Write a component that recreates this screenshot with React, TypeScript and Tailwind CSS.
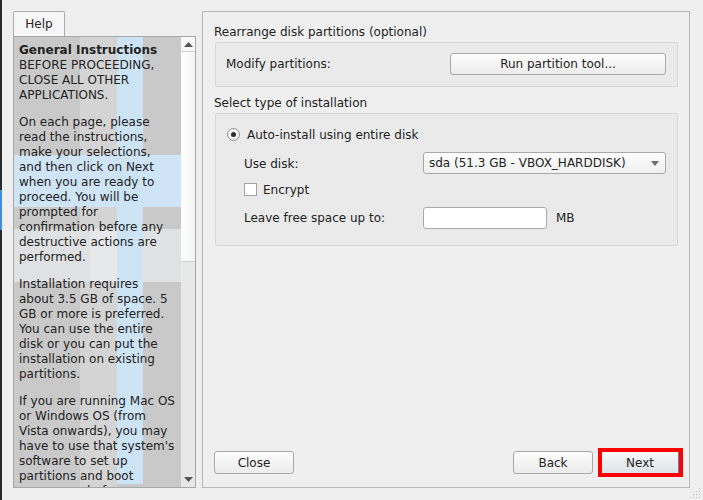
import React from "react";

const helpParas: { bold?: string; lines: string[] }[] = [
  { bold: "General Instructions", lines: ["BEFORE PROCEEDING,", "CLOSE ALL OTHER", "APPLICATIONS."] },
  {
    lines: [
      "On each page, please",
      "read the instructions,",
      "make your selections,",
      "and then click on Next",
      "when you are ready to",
      "proceed. You will be",
      "prompted for",
      "confirmation before any",
      "destructive actions are",
      "performed.",
    ],
  },
  {
    lines: [
      "Installation requires",
      "about 3.5 GB of space. 5",
      "GB or more is preferred.",
      "You can use the entire",
      "disk or you can put the",
      "installation on existing",
      "partitions.",
    ],
  },
  {
    lines: [
      "If you are running Mac OS",
      "or Windows OS (from",
      "Vista onwards), you may",
      "have to use that system's",
      "software to set up",
      "partitions and boot",
      "sequences before",
    ],
  },
];

const btn =
  "flex items-center justify-center border border-[#a9a9a9] rounded-[3px] bg-linear-to-b from-[#fcfcfc] to-[#ececec] text-[#232323]";

export default function App() {
  return (
    <div
      className="relative flex h-[500px] w-[703px] overflow-hidden bg-[#efefef] text-[12px] leading-[15px] text-[#232323]"
      style={{ fontFamily: '"DejaVu Sans", "Liberation Sans", sans-serif' }}
    >
      {/* left window edge */}
      <div className="flex w-[2px] flex-col">
        <div className="h-[190px] bg-[#2b2b2b]" />
        <div className="h-[40px] bg-[#3d8ee0]" />
        <div className="flex-1 bg-[#2b2b2b]" />
      </div>

      {/* Help column */}
      <div className="ml-[11px] mt-[11px] flex h-[477px] w-[183px] flex-col">
        <div className="flex h-[25px] w-[52px] items-center justify-center rounded-t-[2px] border-x border-t border-[#acacac] bg-[#f6f6f6] pt-[1px]">
          Help
        </div>
        <div className="flex min-h-0 flex-1 border border-[#a8a8a8] bg-white">
          <div className="relative min-h-0 flex-1 overflow-hidden bg-[#c9c9c9]">
            {/* background artifacts */}
            <div className="absolute bottom-0 left-[66px] top-0 w-[37px] bg-[#d4d4d4]" />
            <div className="absolute left-0 right-0 top-[118px] h-[52px] bg-[#cfe4f6]" />
            <div className="absolute left-0 right-0 top-[192px] h-[53px] bg-[#e0e1e2]" />
            <div className="absolute left-[76px] top-[192px] h-[53px] w-[27px] bg-[#e7e8e9]" />
            <div className="absolute bottom-[3px] left-[103px] top-0 w-[26px] bg-[#cde3f6]" />

            <div className="relative pl-[5px] pt-[6px]">
              {helpParas.map((p, i) => (
                <div key={i} className="mb-[12px]">
                  {p.bold && <div className="h-[15px] whitespace-nowrap font-bold">{p.bold}</div>}
                  {p.lines.map((l, j) => (
                    <div key={j} className="h-[15px] whitespace-nowrap">
                      {l}
                    </div>
                  ))}
                </div>
              ))}
            </div>
          </div>
          {/* scrollbar */}
          <div className="flex w-[14px] flex-col bg-[#f2f2f2]">
            <div className="flex h-[15px] items-center justify-center border-b border-[#d2d2d2] bg-[#f7f7f7]">
              <svg width="9" height="5" viewBox="0 0 9 5">
                <path d="M0 5 L4.5 0 L9 5 Z" fill="#555" />
              </svg>
            </div>
            <div className="h-[210px] border-b border-[#d0d0d0] bg-linear-to-r from-[#ffffff] to-[#f4f4f4]" />
            <div className="flex-1 bg-[#e8e8e8]" />
            <div className="flex h-[12px] items-start justify-center bg-[#e8e8e8] pt-[2px]">
              <svg width="9" height="5" viewBox="0 0 9 5">
                <path d="M0 0 L4.5 5 L9 0 Z" fill="#555" />
              </svg>
            </div>
          </div>
        </div>
      </div>

      {/* Main panel */}
      <div className="ml-[6px] mt-[11px] flex h-[477px] w-[488px] flex-col border border-[#b8b8b8] px-[11px] pt-[13px]">
        <div className="h-[15px] whitespace-nowrap">Rearrange disk partitions (optional)</div>
        <div className="ml-[1px] mt-[2px] flex items-center rounded-[2px] border border-[#d8d8d8] bg-[#eaeaea] pb-[11px] pl-[10px] pr-[11px] pt-[10px]">
          <span className="pt-[1px]">Modify partitions:</span>
          <div className={`${btn} ml-auto h-[22px] w-[216px] pt-[1px]`}>Run partition tool...</div>
        </div>

        <div className="mt-[9px] h-[15px] whitespace-nowrap">Select type of installation</div>
        <div className="ml-[1px] mt-[2px] flex flex-col rounded-[2px] border border-[#d8d8d8] bg-[#eaeaea] pb-[16px] pr-[11px] pt-[13px]">
          <div className="flex h-[15px] items-center pl-[11px]">
            <div className="flex h-[13px] w-[13px] items-center justify-center rounded-full border border-[#8e8e8e] bg-linear-to-b from-[#ffffff] to-[#ececec]">
              <div className="h-[5px] w-[5px] rounded-full bg-[#2e2e2e]" />
            </div>
            <span className="ml-[7px] pt-[2px]">Auto-install using entire disk</span>
          </div>
          <div className="mt-[10px] flex h-[22px] items-center pl-[28px]">
            <span className="w-[179px] pt-[2px]">Use disk:</span>
            <div className="flex h-[22px] flex-1 items-center justify-between rounded-[3px] border border-[#a9a9a9] bg-linear-to-b from-[#fdfdfd] to-[#f0f0f0] pl-[5px] pr-[6px]">
              <span className="whitespace-nowrap pt-[1px]">sda (51.3 GB - VBOX_HARDDISK)</span>
              <svg width="8" height="5" viewBox="0 0 8 5">
                <path d="M0 0 L4 5 L8 0 Z" fill="#6e6e6e" />
              </svg>
            </div>
          </div>
          <div className="mt-[8px] flex h-[15px] items-center pl-[28px]">
            <div className="h-[13px] w-[13px] border border-[#a3a3a3] bg-white" />
            <span className="ml-[6px] pt-[2px]">Encrypt</span>
          </div>
          <div className="mt-[10px] flex h-[22px] items-center pl-[28px]">
            <span className="w-[179px] whitespace-nowrap pt-[1px]">Leave free space up to:</span>
            <div className="h-[22px] w-[124px] rounded-[3px] border border-[#a9a9a9] bg-white" />
            <span className="ml-[9px] pt-[1px]">MB</span>
          </div>
        </div>

        <div className="mt-auto mb-[10px] flex h-[29px] items-center">
          <div className={`${btn} h-[23px] w-[80px] pt-[1px]`}>Close</div>
          <div className={`${btn} ml-auto h-[23px] w-[80px] pt-[1px]`}>Back</div>
          <div className="-mr-[5px] ml-[5px] h-[29px] w-[85px] border-[4px] border-[#ff0000]">
            <div className="flex h-full w-full items-center justify-center border-r border-[#4f86c6] bg-linear-to-b from-[#f7f9fa] to-[#dde3e8] pt-[1px]">
              Next
            </div>
          </div>
        </div>
      </div>

      {/* resize grip */}
      <svg className="absolute bottom-[2px] right-[2px]" width="11" height="11" viewBox="0 0 11 11">
        <rect x="9" y="1" width="1" height="1" fill="#b5b5b5" />
        <rect x="6" y="4" width="1" height="1" fill="#b5b5b5" />
        <rect x="9" y="4" width="1" height="1" fill="#b5b5b5" />
        <rect x="3" y="7" width="1" height="1" fill="#b5b5b5" />
        <rect x="6" y="7" width="1" height="1" fill="#b5b5b5" />
        <rect x="9" y="7" width="1" height="1" fill="#b5b5b5" />
        <rect x="0" y="10" width="1" height="1" fill="#b5b5b5" />
        <rect x="3" y="10" width="1" height="1" fill="#b5b5b5" />
        <rect x="6" y="10" width="1" height="1" fill="#b5b5b5" />
        <rect x="9" y="10" width="1" height="1" fill="#b5b5b5" />
      </svg>
    </div>
  );
}
